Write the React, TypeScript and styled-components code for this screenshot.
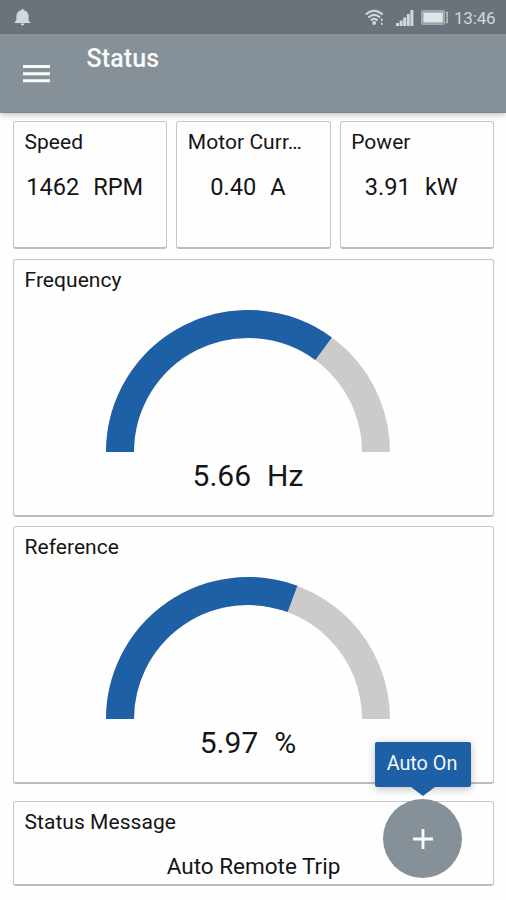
import React from "react";
import styled, { createGlobalStyle } from "styled-components";

const GlobalStyle = createGlobalStyle`
  * { box-sizing: border-box; }
  body {
    margin: 0;
    background: #fefefe;
    font-family: Roboto, "Liberation Sans", sans-serif;
    color: #151515;
  }
`;

const Screen = styled.div`
  display: flex;
  flex-direction: column;
  position: relative;
  width: 506px;
  height: 900px;
  overflow: hidden;
`;

const StatusBar = styled.div`
  display: flex;
  align-items: center;
  height: 34px;
  padding: 1px 11px 0 14px;
  background: #6b737a;
  color: #d3d7da;
`;

const SystemIcons = styled.div`
  display: flex;
  align-items: center;
  margin-left: auto;
`;

const WifiIcon = styled.svg`
  margin-right: 12px;
`;

const SignalIcon = styled.svg`
  margin-right: 7px;
`;

const Clock = styled.span`
  width: 41px;
  margin-left: 5px;
  font-size: 17px;
  line-height: 20px;
  letter-spacing: -0.2px;
  white-space: nowrap;
`;

const AppBar = styled.header`
  display: flex;
  flex: none;
  align-items: flex-start;
  height: 79px;
  padding-left: 23px;
  background: #869098;
  border-bottom: 1px solid #7b858c;
  box-shadow: 0 2px 6px rgba(60, 75, 85, 0.32);
  color: #fafbfb;
`;

const MenuButton = styled.button`
  display: flex;
  width: 27px;
  margin: 31px 36.5px 0 0;
  padding: 0;
  border: 0;
  background: none;
  color: inherit;
`;

const Title = styled.h1`
  margin: 9px 0 0;
  font-size: 25px;
  font-weight: 500;
  line-height: 32px;
  letter-spacing: 0.1px;
`;

const Content = styled.main`
  display: flex;
  flex-direction: column;
  gap: 10px;
  padding: 8px 12px 0 13px;
`;

const TileRow = styled.div`
  display: grid;
  grid-template-columns: repeat(3, 1fr);
  gap: 9px;
`;

const Card = styled.section<{ $height: number; $shift?: number }>`
  display: flex;
  flex-direction: column;
  min-width: 0;
  height: ${(p) => p.$height}px;
  margin-top: ${(p) => p.$shift ?? 0}px;
  padding-top: 8px;
  border: 1px solid #c6c6c6;
  border-bottom: 2px solid #bdbdbd;
  border-radius: 3px;
  background: #fefefe;
`;

const CardTitle = styled.h2`
  margin: 0 10px 0 10.5px;
  font-size: 21px;
  font-weight: 400;
  line-height: 24px;
  letter-spacing: 0.05px;
  white-space: nowrap;
`;

const Reading = styled.div<{ $large?: boolean }>`
  display: flex;
  justify-content: center;
  gap: ${(p) => (p.$large ? 16 : 14)}px;
  margin: ${(p) => (p.$large ? "6px" : "19px")} 11px 0 0;
  font-size: ${(p) => (p.$large ? 30 : 23.6)}px;
  line-height: ${(p) => (p.$large ? 36 : 28)}px;
`;

const GaugeDrawing = styled.svg`
  display: block;
  flex: none;
  margin: 18px 0 0 92px;
`;

const Message = styled.p`
  margin: 19px 0 0;
  font-size: 22.5px;
  line-height: 26px;
  text-align: center;
`;

const FloatingAction = styled.div`
  position: absolute;
  right: 35px;
  bottom: 22px;
  display: flex;
  flex-direction: column;
  align-items: center;
`;

const Hint = styled.div`
  position: relative;
  width: 96px;
  height: 45px;
  margin-bottom: 12px;
  padding-right: 2px;
  border-radius: 2px;
  background: #1e60a5;
  box-shadow: 0 2px 8px rgba(0, 0, 0, 0.25);
  color: #f1f6fb;
  font-size: 19.8px;
  line-height: 43px;
  text-align: center;

  &::after {
    content: "";
    position: absolute;
    top: 100%;
    left: 36px;
    border: 12px solid transparent;
    border-top: 9px solid #1e60a5;
    border-bottom: 0;
  }
`;

const AddButton = styled.button`
  display: flex;
  align-items: center;
  justify-content: center;
  width: 79px;
  height: 79px;
  margin-right: 1px;
  padding: 0;
  border: 0;
  border-radius: 50%;
  background: #869098;
`;

const OUTER = 142;
const THICKNESS = 28;
const MID = OUTER - THICKNESS / 2;

function Gauge({ fraction }: { fraction: number }) {
  const angle = Math.PI * (1 - fraction);
  const x = OUTER + MID * Math.cos(angle);
  const y = OUTER - MID * Math.sin(angle);
  const start = `M${OUTER - MID} ${OUTER}A${MID} ${MID} 0 0 1`;
  return (
    <GaugeDrawing width={OUTER * 2} height={OUTER} fill="none" strokeWidth={THICKNESS}>
      <path d={`${start} ${OUTER + MID} ${OUTER}`} stroke="#cbcbcb" />
      <path d={`${start} ${x} ${y}`} stroke="#1e60a5" />
    </GaugeDrawing>
  );
}

const tiles = [
  { title: "Speed", value: "1462", unit: "RPM" },
  { title: "Motor Curr…", value: "0.40", unit: "A" },
  { title: "Power", value: "3.91", unit: "kW" },
];

const gauges = [
  { title: "Frequency", value: "5.66", unit: "Hz", fraction: 0.701, shift: 0 },
  { title: "Reference", value: "5.97", unit: "%", fraction: 0.613, shift: -1 },
];

export default function App() {
  return (
    <Screen>
      <GlobalStyle />
      <StatusBar>
        <svg width="17" height="17" viewBox="0 0 17 17" fill="currentColor">
          <path d="M8.500 0c.9 0 1.300.5 1.300 1.300C13 2.100 14.600 4.300 14.600 7.300V11.300L16.800 14H.2L2.400 11.300V7.300C2.400 4.300 4 2.100 7.200 1.300 7.200.5 7.600 0 8.500 0Z" />
          <path d="M6.500 14.500h4a2 2 0 0 1-4 0Z" />
        </svg>
        <SystemIcons>
          <WifiIcon width="19" height="17" viewBox="0 0 19 17" fill="none" stroke="currentColor" strokeWidth="2">
            <path d="M.8 5.600Q9.200-2.200 17.600 5.600M3.300 8.600Q9.200 3.200 15.100 8.600M5.800 11.400Q9.200 8.300 12.600 11.400" />
            <circle cx="9.200" cy="14" r="1.900" fill="currentColor" stroke="none" />
            <path d="M16.700 9.500V12M16.700 13.500V16" strokeWidth="1.500" />
          </WifiIcon>
          <SignalIcon width="18" height="16" viewBox="0 0 18 16" fill="currentColor">
            <path d="M0 13h3v3H0zM3.600 10.500h3V16h-3zM7.200 7.500h3V16h-3zM10.800 4h3v12h-3zM14.400 0h3v16h-3z" />
          </SignalIcon>
          <svg width="28" height="15" viewBox="0 0 28 15">
            <rect x=".8" y=".8" width="22.400" height="13.400" rx="1.500" fill="#8b9297" stroke="#a5abb0" strokeWidth="1.600" />
            <rect x="2.300" y="2.500" width="19.500" height="10" fill="#e1e4e5" />
            <path d="M24.500 2.500h1.700v10h-1.700" fill="none" stroke="#b8bdc1" strokeWidth="1.500" />
          </svg>
          <Clock>13:46</Clock>
        </SystemIcons>
      </StatusBar>
      <AppBar>
        <MenuButton aria-label="Menu">
          <svg width="27" height="18" fill="currentColor">
            <path d="M0 0h27v3H0zM0 7.200h27v3H0zM0 14.300h27v3H0z" />
          </svg>
        </MenuButton>
        <Title>Status</Title>
      </AppBar>
      <Content>
        <TileRow>
          {tiles.map((t) => (
            <Card key={t.title} $height={128}>
              <CardTitle>{t.title}</CardTitle>
              <Reading>
                <span>{t.value}</span>
                <span>{t.unit}</span>
              </Reading>
            </Card>
          ))}
        </TileRow>
        {gauges.map((g) => (
          <Card key={g.title} $height={258} $shift={g.shift}>
            <CardTitle>{g.title}</CardTitle>
            <Gauge fraction={g.fraction} />
            <Reading $large>
              <span>{g.value}</span>
              <span>{g.unit}</span>
            </Reading>
          </Card>
        ))}
        <Card $height={85} $shift={7}>
          <CardTitle>Status Message</CardTitle>
          <Message>Auto Remote Trip</Message>
        </Card>
      </Content>
      <FloatingAction>
        <Hint>Auto On</Hint>
        <AddButton aria-label="Add">
          <svg width="20" height="20" stroke="#fafbfb" strokeWidth="2.800">
            <path d="M10 0V20M0 10H20" />
          </svg>
        </AddButton>
      </FloatingAction>
    </Screen>
  );
}
